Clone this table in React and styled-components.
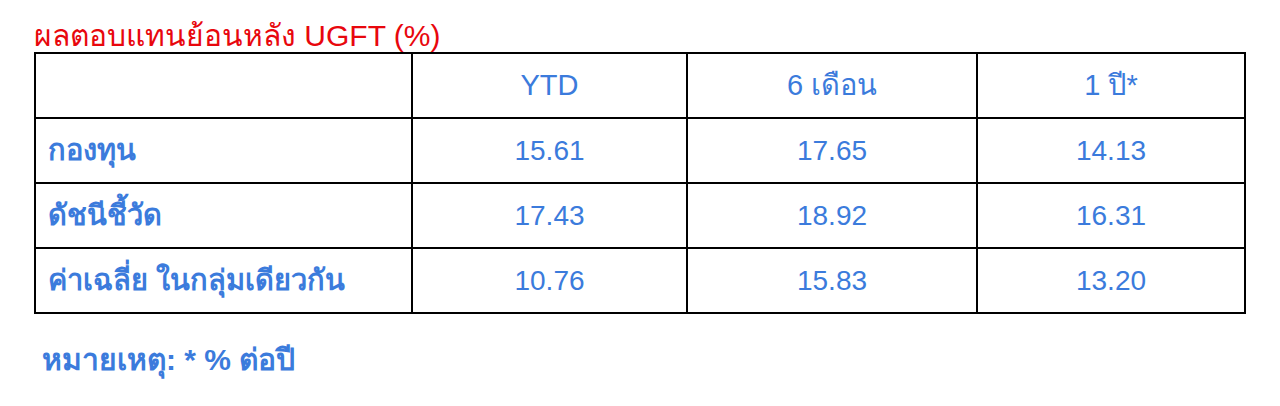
import React from "react";
import styled, { createGlobalStyle } from "styled-components";

const Global = createGlobalStyle`
  html, body { margin: 0; padding: 0; background: #ffffff; }
  body { font-family: "Liberation Sans", "Noto Sans", sans-serif; }
`;

const Page = styled.div`
  width: 1280px;
  height: 406px;
  box-sizing: border-box;
  padding: 19px 0 0 34px;
  background: #fff;
`;

const Title = styled.h1`
  margin: 0;
  height: 33px;
  font-family: "Liberation Sans", "Noto Sans", sans-serif;
  font-weight: 400;
  font-size: 30px;
  line-height: 33px;
  color: #e8070d;
  white-space: nowrap;
`;

const Table = styled.table`
  border-collapse: collapse;
  table-layout: fixed;
  width: 1210px;
  border: 2px solid #000;
`;

const Row = styled.tr`
  height: 65px;
`;

const Cell = styled.td`
  border: 2px solid #000;
  padding: 0 0 0 ${(p) => (p.$label ? "12px" : "0")};
  text-align: ${(p) => (p.$label ? "left" : "center")};
  vertical-align: middle;
  color: #3b7bdc;
  font-family: "Liberation Sans", "Noto Sans", sans-serif;
  font-size: ${(p) => (p.$label || p.$head ? "29px" : "28px")};
  font-weight: ${(p) => (p.$bold ? 700 : 400)};
  line-height: 1;
  white-space: nowrap;
`;

const Note = styled.p`
  margin: 22px 0 0 8px;
  color: #3b7bdc;
  font-family: "Liberation Sans", "Noto Sans", sans-serif;
  font-size: 30px;
  font-weight: 700;
`;

const rows = [
  ["กองทุน", "15.61", "17.65", "14.13"],
  ["ดัชนีชี้วัด", "17.43", "18.92", "16.31"],
  ["ค่าเฉลี่ย ในกลุ่มเดียวกัน", "10.76", "15.83", "13.20"],
];

export default function App() {
  return (
    <Page>
      <Global />
      <Title>ผลตอบแทนย้อนหลัง UGFT (%)</Title>
      <Table>
        <colgroup>
          <col style={{ width: "377px" }} />
          <col style={{ width: "275px" }} />
          <col style={{ width: "290px" }} />
          <col style={{ width: "268px" }} />
        </colgroup>
        <tbody>
          <Row>
            <Cell $label />
            <Cell $head>YTD</Cell>
            <Cell $head>6 เดือน</Cell>
            <Cell $head>1 ปี*</Cell>
          </Row>
          {rows.map((r) => (
            <Row key={r[0]}>
              <Cell $label $bold>{r[0]}</Cell>
              <Cell>{r[1]}</Cell>
              <Cell>{r[2]}</Cell>
              <Cell>{r[3]}</Cell>
            </Row>
          ))}
        </tbody>
      </Table>
      <Note>หมายเหตุ: * % ต่อปี</Note>
    </Page>
  );
}
